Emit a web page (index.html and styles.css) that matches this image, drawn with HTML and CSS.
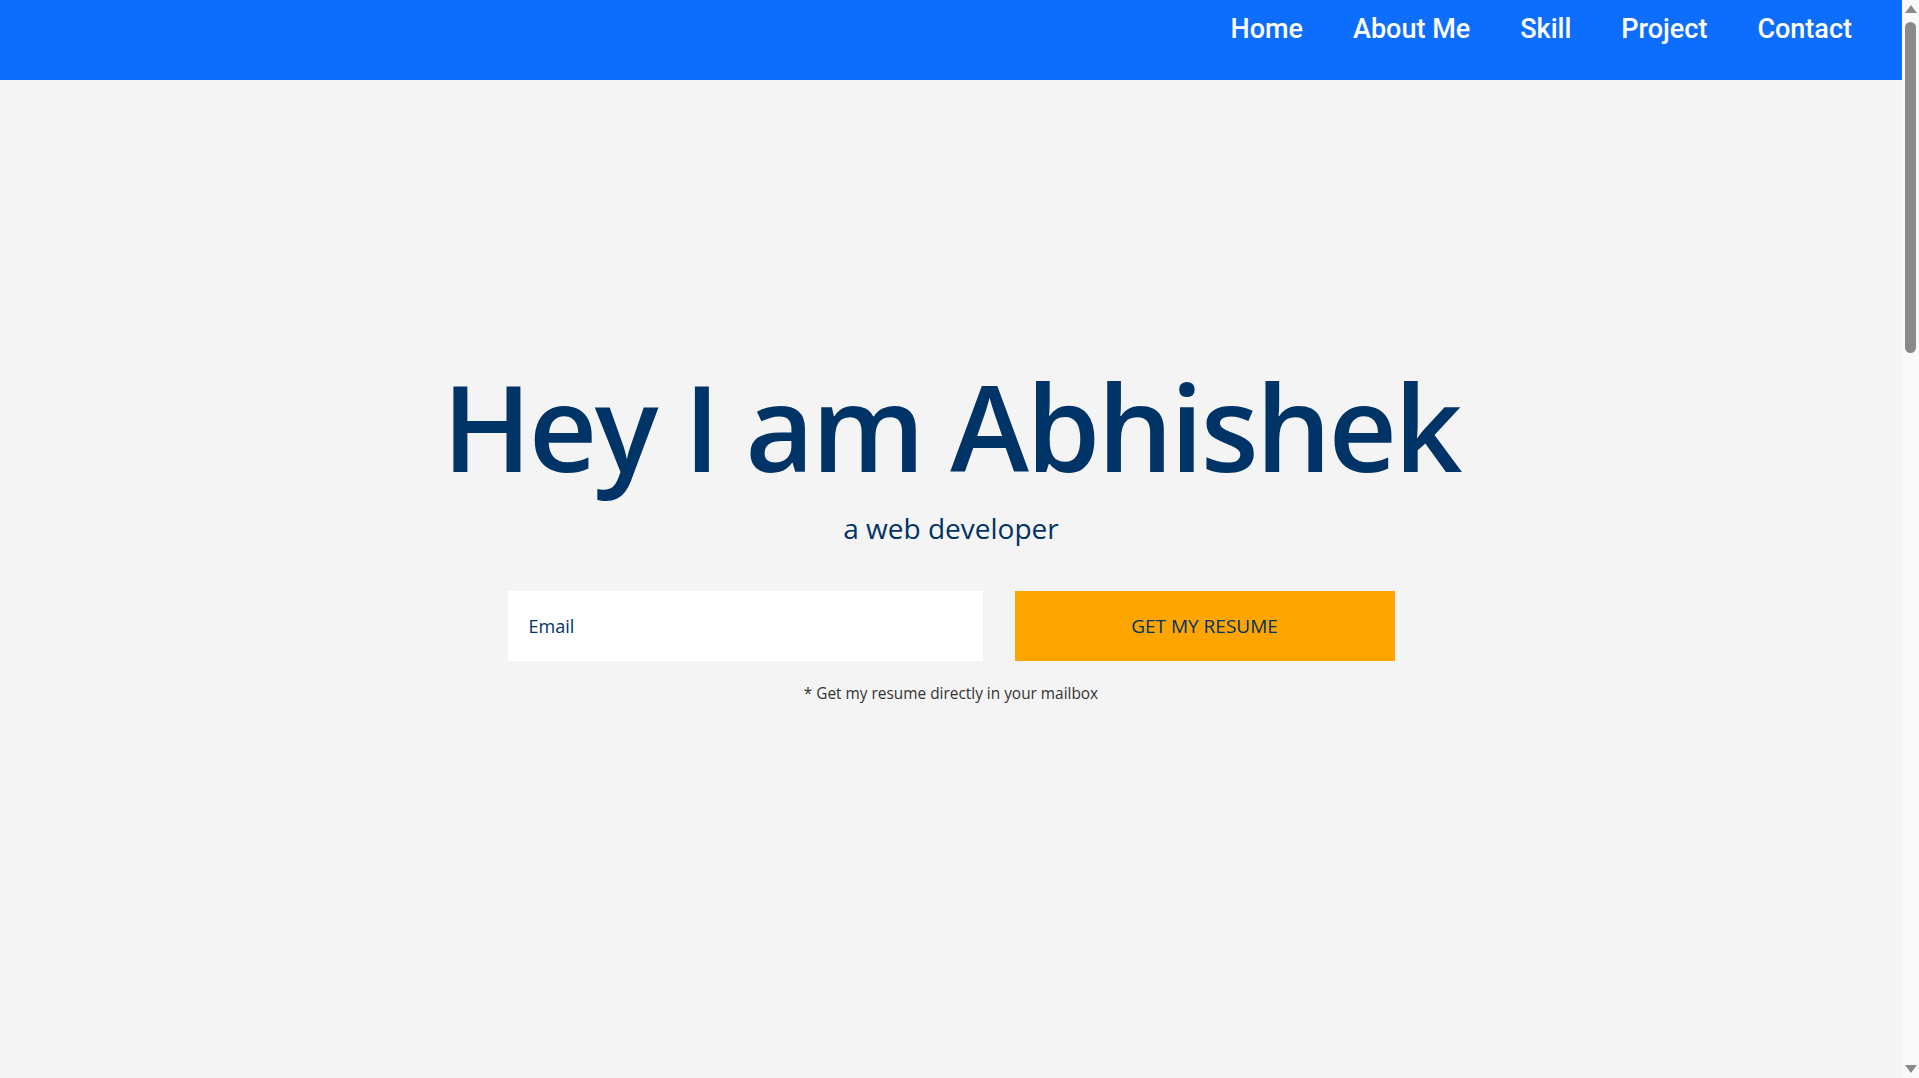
FILE: index.html
```html
<!DOCTYPE html>
<html lang="en">
<head>
<meta charset="utf-8">
<title>Abhishek</title>
<link rel="stylesheet" href="styles.css">
</head>
<body>
<nav class="topbar">
  <ul class="menu">
    <li><a href="#home">Home</a></li>
    <li><a href="#about">About Me</a></li>
    <li><a href="#skill">Skill</a></li>
    <li><a href="#project">Project</a></li>
    <li><a href="#contact">Contact</a></li>
  </ul>
</nav>
<main>
  <section class="hero" id="home">
    <h1 class="title">Hey I am Abhishek</h1>
    <p class="subtitle">a web developer</p>
    <form class="resume-form">
      <input class="email" type="email" placeholder="Email">
      <button class="resume-btn" type="button">GET MY RESUME</button>
    </form>
    <p class="note">* Get my resume directly in your mailbox</p>
  </section>
  <section class="section" id="about"></section>
  <section class="section" id="skill"></section>
  <section class="section" id="project"></section>
  <section class="section" id="contact"></section>
</main>
<div class="scrollbar" aria-hidden="true">
  <span class="arrow arrow-up"></span>
  <span class="thumb"></span>
  <span class="arrow arrow-down"></span>
</div>
</body>
</html>
```

FILE: styles.css
```css
* { box-sizing: border-box; }
html, body { margin: 0; padding: 0; }
html { scrollbar-width: none; }
body {
  background: #f4f4f4;
  font-family: "Open Sans", "Noto Sans", sans-serif;
  color: #003366;
  padding-right: 17px;
}
.topbar {
  position: fixed;
  top: 0; left: 0; right: 17px;
  height: 80px;
  background: #0d6efd;
  z-index: 10;
}
.menu {
  list-style: none;
  margin: 0;
  padding: 13px 50px 0 0;
  display: flex;
  justify-content: flex-end;
  gap: 50px;
}
.menu a {
  font-family: Roboto, "Liberation Sans", sans-serif;
  font-weight: 500;
  font-size: 27px;
  color: #ffffff;
  text-decoration: none;
}
.hero {
  height: 1078px;
  display: flex;
  flex-direction: column;
  align-items: center;
  padding-top: 367px;
}
.title {
  margin: 0;
  font-weight: 600;
  font-size: 119px;
  line-height: 1;
  color: #003366;
  letter-spacing: -2.8px;
}
.subtitle {
  margin: 28px 0 0;
  font-size: 28px;
  line-height: 1;
  color: #003366;
}
.resume-form {
  display: flex;
  gap: 32px;
  margin-top: 49px;
}
.email {
  width: 475px;
  height: 70px;
  border: none;
  background: #fff;
  padding: 0 21px;
  font-family: "Open Sans", sans-serif;
  font-size: 18px;
  color: #003366;
  outline: none;
}
.email::placeholder { color: #003366; opacity: 1; }
.resume-btn {
  width: 380px;
  height: 70px;
  border: none;
  background: #ffa500;
  font-family: "Open Sans", sans-serif;
  font-size: 19px;
  color: #003366;
}
.note {
  margin: 25px 0 0;
  font-size: 15.4px;
  line-height: 1;
  color: #333;
}
.section {
  height: 580px;
}
.scrollbar {
  position: fixed;
  top: 0; right: 0; bottom: 0;
  width: 17px;
  background: #f9f9f9;
  display: flex;
  flex-direction: column;
  align-items: center;
  z-index: 20;
}
.arrow {
  width: 0; height: 0;
  border-left: 6px solid transparent;
  border-right: 6px solid transparent;
}
.arrow-up {
  margin-top: 5px;
  border-bottom: 8px solid #8a8a8a;
}
.thumb {
  margin-top: 9px;
  width: 11px;
  height: 331px;
  background: #8a8a8a;
  border-radius: 6px;
}
.arrow-down {
  margin-top: auto;
  margin-bottom: 5px;
  border-top: 8px solid #8a8a8a;
}
```
